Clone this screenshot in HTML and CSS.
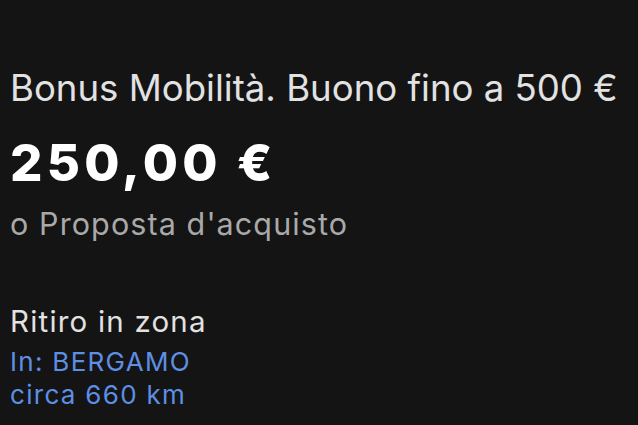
FILE: index.html
```html
<!DOCTYPE html>
<html lang="it">
<head>
    <meta charset="UTF-8">
    <meta name="viewport" content="width=device-width, initial-scale=1.0">
    <title>Annuncio</title>
    <link rel="stylesheet" href="styles.css">
</head>
<body>
    <main class="listing">
        <section class="summary">
            <h1 class="title">Bonus Mobilità. Buono fino a 500 €</h1>
            <p class="price">250,00 €</p>
            <p class="offer">o Proposta d'acquisto</p>
        </section>
        <section class="pickup">
            <p class="pickup-label">Ritiro in zona</p>
            <p class="pickup-link">In: BERGAMO</p>
            <p class="pickup-link">circa 660 km</p>
        </section>
    </main>
</body>
</html>
```

FILE: styles.css
```css
/* pagina annuncio, tema scuro */
html, body {
    margin: 0;
    height: 100%;
}
body {
    font-family: Inter, Roboto, "Noto Sans", Arial, sans-serif;
    background-color: #141414;
    color: #e2e2e2;
}
.listing {
    padding: 65px 10px 0;
}
.title,
.price,
.offer,
.pickup-label,
.pickup-link {
    margin: 0;
}
.title {
    font-size: 36.6px;
    font-weight: 400;
    line-height: 46px;
}
.price {
    font-size: 51px;
    font-weight: 800;
    color: #ffffff;
    line-height: 60px;
    letter-spacing: 4.2px;
    margin-top: 22px;
}
.offer {
    font-size: 30.5px;
    color: #a9a9a9;
    line-height: 36px;
    letter-spacing: 1.1px;
    margin-top: 13px;
}
.pickup {
    margin-top: 61px;
}
.pickup-label {
    font-size: 29.5px;
    line-height: 36px;
    letter-spacing: 1.2px;
    margin-bottom: 6px;
}
.pickup-link {
    font-size: 26px;
    color: #5d8fe4;
    line-height: 33px;
    letter-spacing: 1.3px;
}
```
